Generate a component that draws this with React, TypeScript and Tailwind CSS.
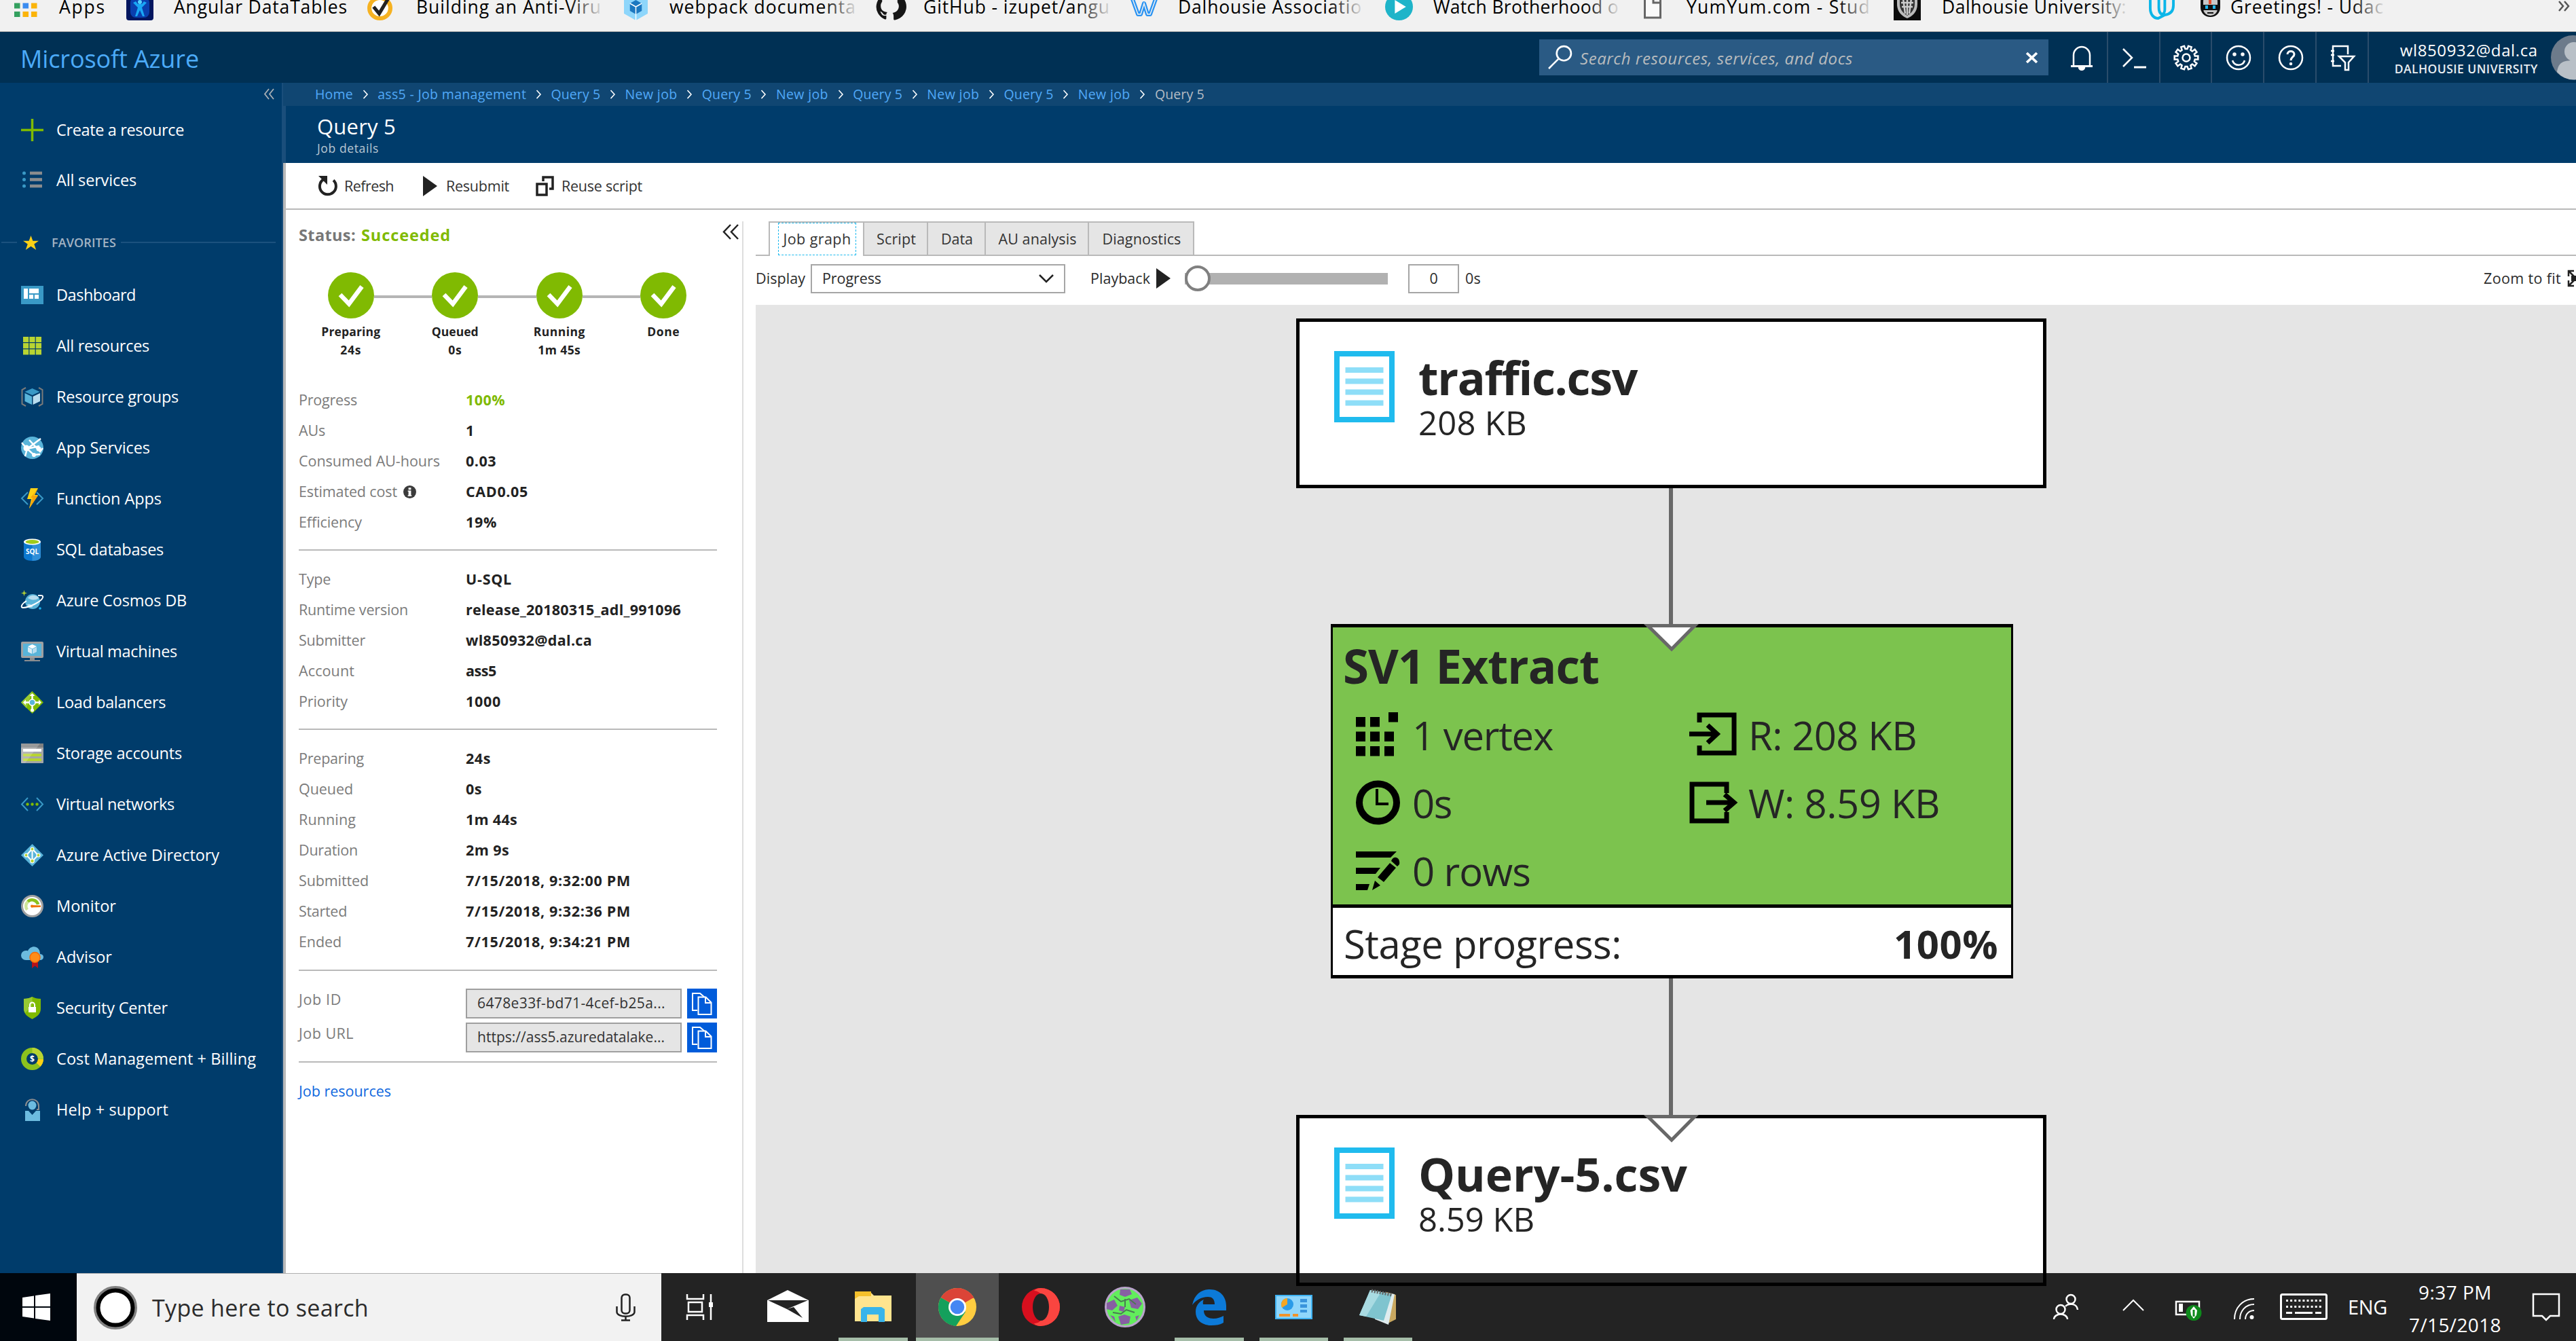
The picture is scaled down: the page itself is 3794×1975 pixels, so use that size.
import React, { useLayoutEffect, useRef, useState } from "react";

/* Text run whose tracking is computed so that it fills a given advance width. */
function T({ w, c = "", children }: { w: number; c?: string; children: string }) {
  const ref = useRef<HTMLSpanElement>(null);
  const [ls, setLs] = useState(0);
  useLayoutEffect(() => {
    if (!ref.current) return;
    const natural = ref.current.getBoundingClientRect().width - ls * children.length;
    setLs((w - natural) / children.length);
  }, [w, children]);
  return (
    <span ref={ref} className={"inline-block shrink-0 whitespace-pre " + c} style={{ letterSpacing: ls + "px" }}>
      {children}
    </span>
  );
}

type IconProps = { children: React.ReactNode; c?: string; vb?: string };
const Svg = ({ children, c = "w-[33px] h-[33px]", vb = "0 0 33 33" }: IconProps) => (
  <svg viewBox={vb} className={"block shrink-0 overflow-visible " + c} fill="none" preserveAspectRatio="none">
    {children}
  </svg>
);

/* ---------- bookmarks ---------- */
const fade = "bg-linear-to-r from-transparent to-[#f1f1f1]";

function Bookmark({ lead, icon, iw, gap, w, text, faded = true }: { lead: number; icon: React.ReactNode; iw: number; gap: number; w: number; text: string; faded?: boolean }) {
  return (
    <div className="flex h-[32px] shrink-0 items-start" style={{ marginLeft: lead }}>
      <div className="shrink-0" style={{ width: iw }}>{icon}</div>
      <div className="relative -mt-[10px] shrink-0" style={{ marginLeft: gap }}>
        <T w={w} c="text-[26.5px] leading-[40px] text-black">{text}</T>
        {faded && <div className={"absolute top-0 -right-1 h-full w-[52px] " + fade} />}
      </div>
    </div>
  );
}

const bmSize = "w-full h-[40px] -mt-[10px]";

function Bookmarks() {
  return (
    <div className="flex h-[47px] shrink-0 overflow-hidden border-b border-[#aaaaaa] bg-[#f1f1f1]">
      <Bookmark lead={21} iw={34} gap={32} w={69} text="Apps" faded={false} icon={
        <Svg c="w-full h-[34px] -mt-[9px]" vb="0 0 34 34">
          {[["#e8453c", "#e8453c", "#e8453c"], ["#34a05f", "#3b8cf0", "#fbb40a"], ["#34a05f", "#fbb40a", "#fbb40a"]].map((r, y) =>
            r.map((f, x) => <rect key={x + "" + y} x={x * 12.5} y={y * 12.5 + 1} width="8.5" height="8" fill={f} />))}
        </Svg>} />
      <Bookmark lead={30} iw={40} gap={30} w={256} text="Angular DataTables" faded={false} icon={
        <Svg c={bmSize} vb="0 0 40 40">
          <rect width="40" height="40" rx="4" fill="#03165f" />
          <rect x="6" y="6" width="28" height="30" rx="8" fill="#0a3fae" />
          <path d="M10 14l7 7-4 13h3l4-9 4 9h3l-4-13 7-7-4-2-3 4h-6l-3-4z" fill="#19a7f5" />
          <circle cx="20" cy="13" r="3" fill="#54d2ff" />
        </Svg>} />
      <Bookmark lead={29} iw={37} gap={35} w={273} text="Building an Anti-Viru" icon={
        <Svg c={bmSize} vb="0 0 36 40">
          <circle cx="18" cy="22" r="15" fill="#fff" stroke="#f6b221" strokeWidth="6" />
          <path d="M9 20l8 10L31 6" stroke="#222" strokeWidth="5" />
        </Svg>} />
      <Bookmark lead={33} iw={35} gap={32} w={275} text="webpack documenta" icon={
        <Svg c={bmSize} vb="0 0 36 40">
          <path d="M18 0L36 10v20L18 40 0 30V10z" fill="#8ed6fb" />
          <path d="M18 10l9 5v11l-9 5-9-5V15z" fill="#1c78c0" />
          <path d="M18 40V31M18 20V31M18 20l9-5M18 20l-9-5" stroke="#fff" strokeWidth="1.5" />
        </Svg>} />
      <Bookmark lead={29} iw={41} gap={29} w={275} text="GitHub - izupet/angu" icon={
        <Svg c={bmSize} vb="0 0 40 40">
          <path d="M20 0a20 20 0 0 0-7 38.5c1.5.3 2-.6 2-1.5v-4c-6 1-7-3-7-3-1-2-2-3-2-3 3 0 4 3 5 4 1 1 3 1 4 .5 0-2 1-3 1.5-3.5-8-1-9.5-5-9.5-10 0-2 1-4 2-5.5V8c3 0 5 2 5 2h12s2-2 5-2v5.5c1 1.5 2 3.5 2 5.5 0 5-3 9-9 10 1 1 1.5 3 1.5 5v4c0 1 .5 1.5 2 1.5A20 20 0 0 0 20 0z" fill="#161616" />
          <path d="M12 12h16c3 4 2 12-8 12s-11-8-8-12z" fill="#f1f1f1" />
        </Svg>} />
      <Bookmark lead={30} iw={40} gap={30} w={271} text="Dalhousie Associatio" icon={
        <Svg c={bmSize} vb="0 0 40 40">
          <path d="M2 6l9 25h4l5-16 5 16h4l9-25" stroke="#2a93f2" strokeWidth="6" strokeLinejoin="round" />
          <path d="M2 6l9 25h4l5-16 5 16h4l9-25" stroke="#f1f1f1" strokeWidth="1.5" />
        </Svg>} />
      <Bookmark lead={34} iw={41} gap={30} w={273} text="Watch Brotherhood o" icon={
        <Svg c={bmSize} vb="0 0 40 40"><circle cx="20" cy="20" r="20" fill="#1eb4c9" /><path d="M14 10l16 10-16 10z" fill="#fff" /></Svg>} />
      <Bookmark lead={37} iw={26} gap={37} w={271} text="YumYum.com - Stud" icon={
        <Svg c="w-full h-[38px] -mt-[10px]" vb="0 0 26 38"><path d="M1.5 1h14l9 9v26h-23zM14 2v12h10" stroke="#666" strokeWidth="3" fill="#fafafa" /></Svg>} />
      <Bookmark lead={34} iw={40} gap={31} w={272} text="Dalhousie University:" icon={
        <Svg c={bmSize} vb="0 0 40 40">
          <rect width="40" height="40" fill="#0c0c0c" />
          <path d="M5 0h30v16c0 12-8 18-15 21C13 34 5 28 5 16z" fill="#bbb" />
          <path d="M9 4h22v12c0 9-6 14-11 17C15 30 9 25 9 16z" fill="#333" />
          <path d="M14 8l3 22M20 6v26M26 8l-3 22M11 14h18M12 20h16" stroke="#ccc" strokeWidth="2.5" />
        </Svg>} />
      <Svg c="ml-[32px] w-[39px] h-[40px] -mt-[10px]" vb="0 0 40 40"><path d="M3 2v20c0 9 5 15 12 15l10-5c-6 0-9-4-9-11V0M25 0v24c0 4-2 7-5 7M38 0v18c0 9-6 13-13 14" stroke="#0cb6e8" strokeWidth="4" /></Svg>
      <Bookmark lead={37} iw={31} gap={14} w={226} text="Greetings! - Udac" icon={
        <Svg c="w-full h-[38px] -mt-[12px]" vb="0 0 31 38">
          <rect x="1" y="0" width="29" height="37" rx="14" fill="#111" />
          <rect x="5" y="4" width="21" height="31" rx="10" fill="#c8c8c8" />
          <rect x="13" y="6" width="4" height="12" fill="#e84c2a" />
          <rect x="4" y="19" width="23" height="8" fill="#111" /><rect x="8" y="20" width="4" height="5" fill="#1fb8f0" /><rect x="19" y="20" width="4" height="5" fill="#1fb8f0" />
          <rect x="11" y="30" width="9" height="2" fill="#111" />
        </Svg>} />
      <Svg c="ml-auto mr-[10px] mt-[2px] h-[14px] w-[16px]" vb="0 0 16 14"><path d="M1 0l6 7-6 7M9 0l6 7-6 7" stroke="#555" strokeWidth="2.5" /></Svg>
    </div>
  );
}

/* ---------- portal header ---------- */
const gear = Array.from({ length: 10 }, (_, i) => {
  const p = (r: number, a: number) => `${19 + r * Math.cos(a)},${19 + r * Math.sin(a)}`;
  const a = (i * Math.PI) / 5;
  return [p(13, a - 0.2), p(17.5, a - 0.14), p(17.5, a + 0.14), p(13, a + 0.2)].join(" ");
}).join(" ");

const headerIcons = [
  <><path d="M7 31V15a12 12 0 0 1 24 0v16" /><path d="M3 31.5h32" strokeWidth="3" /><path d="M15 33c0 5 8 5 8 0" fill="#fff" /></>,
  <><path d="M3 6l13 13L3 32" /><path d="M19 33h18" strokeWidth="3" /></>,
  <><polygon points={gear} /><circle cx="19" cy="19" r="5.5" /></>,
  <><circle cx="19" cy="19" r="17" /><path d="M10 23c3 9 15 9 18 0" /><circle cx="13" cy="14" r="1.5" fill="#fff" /><circle cx="25" cy="14" r="1.5" fill="#fff" /></>,
  <><circle cx="19" cy="19" r="17" /><path d="M14 14c0-6 10-6 10 0 0 4-5 4-5 9" strokeWidth="3" /><circle cx="19" cy="28" r="1" fill="#fff" /></>,
  <><path d="M17 31H5V2h22v12M2 9h5M2 15h5M2 24h5" /><path d="M14 17h22l-8 9v11h-5V26z" /></>,
];

function Header() {
  return (
    <div className="flex h-[75px] shrink-0 items-center overflow-hidden bg-[#003054]">
      <T w={263} c="ml-[30px] pt-[4px] text-[36px] leading-[50px] text-[#4cabf8]">Microsoft Azure</T>
      <div className="ml-[1974px] flex h-[53px] w-[750px] shrink-0 items-center bg-[#2a5a84] pl-[13px]">
        <Svg c="w-[35px] h-[35px]"><circle cx="22" cy="11" r="10" stroke="#fff" strokeWidth="2.5" /><path d="M15 18L1 32" stroke="#fff" strokeWidth="2.5" /></Svg>
        <T w={402} c="ml-[12px] pt-[2px] text-[24px] leading-[34px] text-[#b9bcbe] italic">Search resources, services, and docs</T>
        <Svg c="mr-[16px] ml-auto w-[17px] h-[16px]" vb="0 0 16 16"><path d="M1 1l14 14M15 1L1 15" stroke="#fff" strokeWidth="3.5" /></Svg>
      </div>
      <div className="ml-[11px] flex h-full shrink-0">
        {headerIcons.map((ic, i) => (
          <div key={i} className="flex h-full w-[76.8px] items-center justify-center border-r-2 border-[#2a4c6b]">
            <Svg c="ml-[2px] w-[38px] h-[38px]" vb="0 0 38 38"><g stroke="#fff" strokeWidth="2.5">{ic}</g></Svg>
          </div>
        ))}
      </div>
      <div className="flex w-[249px] shrink-0 flex-col items-end pt-[2px]">
        <T w={203} c="text-[24px] leading-[32px] text-white">wl850932@dal.ca</T>
        <T w={211} c="-mt-[2px] text-[17.5px] leading-[26px] font-semibold text-[#e8edf1]">DALHOUSIE UNIVERSITY</T>
      </div>
      <Svg c="ml-[19px] w-[65px] h-[65px]" vb="0 0 65 65">
        <circle cx="32.5" cy="32.5" r="32.5" fill="#6d7b8b" />
        <circle cx="34" cy="24" r="14" fill="#b9c0c7" /><path d="M9 54c2-16 12-17 25-17s22 3 24 17a32 32 0 0 1-49 0z" fill="#b9c0c7" />
      </Svg>
    </div>
  );
}

/* ---------- sidebar ---------- */
const cube = (
  <><path d="M16.5 4l11 5-11 5-11-5z" fill="#3999c6" /><path d="M5.5 11L16 16v12L5.5 23z" fill="#59b4d9" /><path d="M28 11l-10.500 5v12L28 23z" fill="#b8dcee" /></>
);

const nav: [string, number, React.ReactNode][] = [
  ["Dashboard", 117, <><rect y="3" width="33" height="27" fill="#3999c6" /><path d="M4 7h6v15H4zM12 7h14v7H12zM12 16h6v6h-6zM20 16h6v6h-6z" fill="#fff" /></>],
  ["All resources", 137, <>{[0, 1, 2].map(y => [0, 1, 2].map(x => <rect key={x + "" + y} x={3 + x * 9.4} y={3 + y * 9.2} width="8.2" height="8" fill="#b8d432" />))}</>],
  ["Resource groups", 180, <>{cube}<path d="M7 3L1.5 6v21L7 30M26 3l5.5 3v21L26 30" stroke="#7a7a7a" strokeWidth="2" /></>],
  ["App Services", 138, <><circle cx="16.5" cy="16.5" r="16.5" fill="#59b4d9" /><path d="M1 9l8 9 20-15M9 18L6 29M9 18l18-4M12 5l16 17 4-5M9 18l10 9 9-1" stroke="#fff" strokeWidth="2.5" /><circle cx="8" cy="17" r="4.5" fill="#fff" /><circle cx="26" cy="18" r="3.5" fill="#fff" /><circle cx="19" cy="27" r="3" fill="#fff" /></>],
  ["Function Apps", 155, <><path d="M10 7L1 16l9 9M23 7l9 9-9 9" stroke="#3999c6" strokeWidth="2" /><path d="M14 1h11l-5 10h5L12 31l3-14H9z" fill="#fcd116" /><path d="M25 1l-7 11h7L12 31l5-16h-3z" fill="#f5a60c" /></>],
  ["SQL databases", 158, <><path d="M4 5v22c0 3 5 6 12.5 6S29 30 29 27V5z" fill="#0c78cf" /><path d="M16.5 5H29v22c0 3-5 6-12.500 6z" fill="#2f8fd8" /><ellipse cx="16.5" cy="5" rx="12.5" ry="4.5" fill="#fff" /><ellipse cx="16.5" cy="5" rx="10" ry="3" fill="#9fca1c" /><text x="16.5" y="23" textAnchor="middle" fontSize="10" fontWeight="700" fill="#fff" fontFamily="Open Sans">SQL</text></>],
  ["Azure Cosmos DB", 192, <><circle cx="17" cy="18" r="11" fill="#59b4d9" /><path d="M10 13c4-6 12-5 16-1 0 3-8 4-11 3zM9 22c4-1 8 1 8 4-3 2-7 0-8-4z" fill="#b8dcee" /><path d="M8 17C0 22-1 27 3 27c9 0 27-9 29-15 1-4-4-3-7-3" stroke="#fff" strokeWidth="2" /><path d="M4.5 1l1 3.5 3.5 1-3.5 1-1 3.5-1-3.5-3.500-1 3.5-1z" fill="#b8d432" /><circle cx="28" cy="28" r="1.8" fill="#1eb4ee" /></>],
  ["Virtual machines", 178, <><rect y="2" width="33" height="24" rx="2" fill="#a0a1a2" /><rect x="3" y="5" width="27" height="18" fill="#59b4d9" /><path d="M16.5 6l6.5 3-6.500 3.5L10 9z" fill="#fff" /><path d="M10 10l6 3v7l-6-3z" fill="#dcedf6" /><path d="M23 10l-6 3v7l6-3z" fill="#b8dcee" /><path d="M13 26h7v3h8v2H5v-2h8z" fill="#8b8d8f" /></>],
  ["Load balancers", 161, <><path d="M16.5 0L33 16.5 16.5 33 0 16.5z" fill="#7fba00" /><path d="M16.5 0L8 25 0 16.5z" fill="#9acb33" /><path d="M16.5 5v22M6 16.5h21" stroke="#fff" strokeWidth="2.5" /><path d="M12.5 7l4-4 4 4zM7 12.5l-4 4 4 4zM26 12.5l4 4-4 4z" fill="#fff" /><circle cx="16.5" cy="28" r="2.5" fill="#fff" /><circle cx="16.5" cy="16.5" r="4.5" fill="#59b4d9" stroke="#fff" strokeWidth="1.5" /></>],
  ["Storage accounts", 185, <><rect y="2" width="33" height="29" rx="1" fill="#a5a6a7" /><rect y="2" width="33" height="6" fill="#7f8081" /><rect x="3" y="10" width="27" height="4" fill="#fff" /><rect x="3" y="17" width="27" height="4" fill="#b8d432" /><rect x="3" y="24" width="27" height="4" fill="#b8d432" /><path d="M0 2h28L6 31H0z" fill="#fff" fillOpacity=".2" /></>],
  ["Virtual networks", 174, <><path d="M10 7L1 16.5l9 9.5M23 7l9 9.5-9 9.5" stroke="#3999c6" strokeWidth="2" /><circle cx="9.5" cy="16.5" r="2.2" fill="#7fba00" /><circle cx="16.5" cy="16.5" r="2.2" fill="#7fba00" /><circle cx="23.5" cy="16.5" r="2.2" fill="#7fba00" /></>],
  ["Azure Active Directory", 240, <><path d="M16.5 0L33 16.5 16.5 33 0 16.5z" fill="#59b4d9" /><path d="M16.5 7L8 16.5l8.5 9 8.5-9zM16.5 7v18" stroke="#fff" strokeWidth="2" /><g fill="#b8d432" stroke="#fff" strokeWidth="1.2"><circle cx="16.5" cy="7.5" r="2.5" /><circle cx="7.5" cy="16.5" r="2.5" /><circle cx="25.5" cy="16.5" r="2.5" /><circle cx="16.5" cy="25" r="2.8" /></g></>],
  ["Monitor", 88, <><circle cx="16.5" cy="16.5" r="15" fill="#fff" stroke="#a0a1a2" strokeWidth="3" /><path d="M9 22a9 9 0 0 1 1-12" stroke="#cfe59a" strokeWidth="4.5" /><path d="M10 10a9 9 0 0 1 15 4" stroke="#8cc21e" strokeWidth="4.5" /><path d="M15 15l14 .5v2.5l-14 .5z" fill="#f0740d" /><circle cx="16" cy="16.5" r="2" fill="#f0740d" /></>],
  ["Advisor", 82, <><path d="M7 21a7 7 0 0 1 0-14c2 0 2 0 3 .5C14-2 28-1 28 12c7 0 6 9 1 9z" fill="#6cbbdf" /><path d="M16 22v11l4.5-3.5L25 33V22z" fill="#b5121b" /><circle cx="20.5" cy="17" r="7.5" fill="#ff8c1a" stroke="#ef6c0c" strokeWidth="1.5" /></>],
  ["Security Center", 164, <><path d="M4 3c5 0 9-1 12.5-3C20 2 24 3 29 3v15c0 8-7 12-12.500 15C11 30 4 26 4 18z" fill="#7fba00" /><path d="M4 3c5 0 9-1 12.5-3v13L6 24c-1-2-2-4-2-6z" fill="#97c933" /><rect x="11" y="15" width="11" height="8" fill="#fff" /><path d="M13 15v-3a3.5 3.5 0 0 1 7 0v3" stroke="#fff" strokeWidth="2" /></>],
  ["Cost Management + Billing", 294, <><circle cx="16.5" cy="16.5" r="12.5" stroke="#8cc21e" strokeWidth="8" /><path d="M16.5 4A12.5 12.5 0 0 1 29 16.5" stroke="#b8d432" strokeWidth="8" /><path d="M29 17a12.5 12.5 0 0 1-3.5 8" stroke="#fcd116" strokeWidth="8" /><text x="16.5" y="21" textAnchor="middle" fontSize="12" fontWeight="700" fill="#fff" fontFamily="Open Sans">$</text></>],
  ["Help + support", 165, <><path d="M7 11C7-2 26-2 26 11v5h-3" stroke="#8b8d8f" strokeWidth="2" /><ellipse cx="16.5" cy="10" rx="6" ry="6.5" fill="#6cbbdf" /><path d="M6 18h5l5.5 6 5.5-6h6v15H6z" fill="#6cbbdf" /></>],
];

const NavRow = ({ icon, w, label, h = "h-[75px]" }: { icon: React.ReactNode; w: number; label: string; h?: string }) => (
  <div className={"flex shrink-0 items-center pb-[1px] pl-[31px] " + h}>
    <Svg>{icon}</Svg>
    <T w={w} c="ml-[19px] text-[23.5px] leading-[32px] text-white">{label}</T>
  </div>
);

function Sidebar() {
  return (
    <div className="flex w-[415px] shrink-0 flex-col bg-[#003c6b]">
      <div className="flex h-[33px] shrink-0 items-center justify-end pr-[11px]">
        <Svg c="w-[15px] h-[15px]" vb="0 0 15 15"><path d="M7 0L1 7.5 7 15M14 0L8 7.5l6 7.5" stroke="#a9b0b6" strokeWidth="1.8" /></Svg>
      </div>
      <NavRow h="h-[73px]" w={188} label="Create a resource" icon={<path d="M16.5 0v33M0 16.5h33" stroke="#7fba00" strokeWidth="3.5" />} />
      <NavRow h="h-[74px]" w={118} label="All services" icon={<>{[7, 16.5, 26].map(y => <g key={y}><circle cx="4.5" cy={y} r="2.5" fill="#3999c6" /><rect x="13" y={y - 2.3} width="18" height="4.6" fill="#8a8c8e" /></g>)}</>} />
      <div className="flex h-[95px] shrink-0 items-center pt-[15px] pl-[2px]">
        <div className="h-[2px] w-[23px] bg-[#1b517e]" />
        <Svg c="ml-[9px] w-[23px] h-[21px]" vb="0 0 24 22"><path d="M12 0l3 8h9l-7 5 3 9-8-5.500L4 22l3-9-7-5h9z" fill="#fcd116" /></Svg>
        <T w={95} c="ml-[19px] text-[18px] leading-[26px] font-semibold text-[#a3b3c3]">FAVORITES</T>
        <div className="mr-[9px] ml-[7px] h-[2px] flex-1 bg-[#1b517e]" />
      </div>
      {nav.map(([label, w, icon]) => <NavRow key={label} label={label} w={w} icon={icon} />)}
    </div>
  );
}

/* ---------- blade header ---------- */
const crumbs: [string, number][] = [
  ["Home", 56], ["ass5 - Job management", 219], ["Query 5", 73], ["New job", 77], ["Query 5", 73], ["New job", 77],
  ["Query 5", 73], ["New job", 77], ["Query 5", 73], ["New job", 77], ["Query 5", 73],
];

function BladeHeader() {
  return (
    <>
      <div className="flex h-[34px] shrink-0 items-center bg-[#104672] pl-[47px]">
        {crumbs.map(([t, w], i) => (
          <React.Fragment key={i}>
            <T w={w} c={"text-[19.5px] leading-[30px] " + (i === crumbs.length - 1 ? "text-[#b4bcc4]" : "text-[#51a9f8]")}>{t}</T>
            {i < crumbs.length - 1 && <Svg c="mx-[14.6px] w-[7px] h-[12px]" vb="0 0 7 12"><path d="M.5 0L6 6 .5 12" stroke="#fff" strokeWidth="1.6" /></Svg>}
          </React.Fragment>
        ))}
      </div>
      <div className="flex h-[84px] shrink-0 flex-col items-start border-l-4 border-[#1a4e7b] bg-[#003c6b] pt-[9px] pl-[46px]">
        <T w={116} c="text-[31px] leading-[42px] text-white">Query 5</T>
        <T w={91} c="mt-[-2px] text-[17.5px] leading-[26px] text-[#b9c7d3]">Job details</T>
      </div>
    </>
  );
}

/* ---------- job summary ---------- */
const Row = ({ label, lw, value, vw, green, info }: { label: string; lw: number; value: string; vw: number; green?: boolean; info?: boolean }) => (
  <div className="flex h-[45px] shrink-0 items-center pb-[2px] text-[21.5px] leading-[30px]">
    <div className="flex w-[246px] items-center">
      <T w={lw} c="text-[#7b7b7b]">{label}</T>
      {info && (
        <Svg c="ml-[9px] mt-[2px] w-[19px] h-[19px]" vb="0 0 20 20"><circle cx="10" cy="10" r="10" fill="#3b3b3b" /><path d="M8 3.5h4v3H8zM7 8h5v7h1v1.5H7V15h1V9.5H7z" fill="#fff" /></Svg>
      )}
    </div>
    <T w={vw} c={"font-bold " + (green ? "text-[#80ba02]" : "text-[#222222]")}>{value}</T>
  </div>
);

const Rule = ({ c }: { c: string }) => <div className={"h-[2px] w-[616px] shrink-0 bg-[#b9b9b9] " + c} />;

const steps: [string, number, string, number][] = [["Preparing", 87, "24s", 31], ["Queued", 69, "0s", 20], ["Running", 76, "1m 45s", 63], ["Done", 48, "", 0]];

const CopyField = ({ label, lw, value, vw, mt }: { label: string; lw: number; value: string; vw: number; mt: string }) => (
  <div className={"flex h-[44px] shrink-0 " + mt}>
    <T w={lw} c="mt-[1px] text-[21.5px] leading-[30px] text-[#7b7b7b]">{label}</T>
    <div className="ml-auto flex h-[44px] w-[318px] items-center border-2 border-[#9f9f9f] bg-[#e5e5e5] pb-[3px] pl-[15px]">
      <T w={vw} c="text-[21px] leading-[30px] text-[#333333]">{value}</T>
    </div>
    <div className="mr-[37px] ml-[8px] flex h-[44px] w-[44px] items-center justify-center bg-[#015cda]">
      <Svg c="w-[30px] h-[33px]" vb="0 0 30 33">
        <path d="M8 26H1V1h11l7 6" stroke="#fff" strokeWidth="2" />
        <path d="M9.5 6.5h11l8 8V32h-19zM20 7v8h8" stroke="#fff" strokeWidth="2" fill="#015cda" />
      </Svg>
    </div>
  </div>
);

function Summary() {
  return (
    <div className="flex w-[672px] shrink-0 flex-col pl-[19px]">
      <div className="flex h-[73px] shrink-0 items-center">
        <T w={84} c="text-[23.5px] leading-[32px] font-bold text-[#777777]">Status:</T>
        <T w={132} c="ml-[8px] text-[23.5px] leading-[32px] font-bold text-[#80ba02]">Succeeded</T>
        <Svg c="mr-[5px] mb-[9px] ml-auto w-[24px] h-[23px]" vb="0 0 24 23"><path d="M12 1L2 11.5 12 22M23 1L13 11.5 23 22" stroke="#222" strokeWidth="2.5" /></Svg>
      </div>
      <div className="mt-[19px] grid h-[129px] w-[614px] shrink-0 grid-cols-4">
        {steps.map(([n, w, d, dw], i) => (
          <div key={n} className="flex flex-col items-center">
            <div className="mb-[6px] flex w-full items-center">
              <div className={"mt-[3px] h-[4px] flex-1 " + (i ? "bg-[#b5b5b5]" : "bg-transparent")} />
              <Svg c="w-[68px] h-[68px]" vb="0 0 68 68"><circle cx="34" cy="34" r="34" fill="#80ba02" /><path d="M18 33l13 13.5L50 21" stroke="#fff" strokeWidth="6.5" /></Svg>
              <div className={"mt-[3px] h-[4px] flex-1 " + (i < 3 ? "bg-[#b5b5b5]" : "bg-transparent")} />
            </div>
            <T w={w} c="text-[17.5px] leading-[27px] font-bold text-[#222222]">{n}</T>
            {d && <T w={dw} c="text-[17.5px] leading-[27px] font-bold text-[#222222]">{d}</T>}
          </div>
        ))}
      </div>
      <div className="h-[37px] shrink-0" />
      <Row label="Progress" lw={86} value="100%" vw={58} green />
      <Row label="AUs" lw={39} value="1" vw={12} />
      <Row label="Consumed AU-hours" lw={208} value="0.03" vw={45} />
      <Row label="Estimated cost" lw={145} value="CAD0.05" vw={92} info />
      <Row label="Efficiency" lw={93} value="19%" vw={46} />
      <Rule c="mt-[17px] mb-[20px]" />
      <Row label="Type" lw={47} value="U-SQL" vw={68} />
      <Row label="Runtime version" lw={161} value="release_20180315_adl_991096" vw={317} />
      <Row label="Submitter" lw={98} value="wl850932@dal.ca" vw={186} />
      <Row label="Account" lw={82} value="ass5" vw={45} />
      <Row label="Priority" lw={72} value="1000" vw={52} />
      <Rule c="mt-[17px] mb-[20px]" />
      <Row label="Preparing" lw={96} value="24s" vw={37} />
      <Row label="Queued" lw={80} value="0s" vw={24} />
      <Row label="Running" lw={84} value="1m 44s" vw={76} />
      <Row label="Duration" lw={87} value="2m 9s" vw={64} />
      <Row label="Submitted" lw={103} value="7/15/2018, 9:32:00 PM" vw={243} />
      <Row label="Started" lw={71} value="7/15/2018, 9:32:36 PM" vw={243} />
      <Row label="Ended" lw={63} value="7/15/2018, 9:34:21 PM" vw={243} />
      <Rule c="mt-[18px]" />
      <CopyField label="Job ID" lw={63} value="6478e33f-bd71-4cef-b25a..." vw={277} mt="mt-[26px]" />
      <CopyField label="Job URL" lw={81} value="https://ass5.azuredatalake..." vw={276} mt="mt-[6px]" />
      <Rule c="mt-[13px]" />
      <T w={136} c="mt-[27px] self-start text-[21.5px] leading-[30px] text-[#0f68de]">Job resources</T>
    </div>
  );
}

/* ---------- job graph ---------- */
function FileNode({ c, name, nw, size, sw }: { c: string; name: string; nw: number; size: string; sw: number }) {
  return (
    <div className={"absolute flex h-[250px] w-[1105px] border-5 border-black bg-white pt-[43px] pl-[51px] " + c}>
      <Svg c="w-[89px] h-[105px]" vb="0 0 89 105">
        <rect x="4" y="4" width="81" height="97" stroke="#20bbee" strokeWidth="8" fill="#fff" />
        {[24, 40.5, 56.5, 72.5].map(y => <rect key={y} x="16.5" y={y} width="56" height="8" fill="#8edef8" />)}
      </Svg>
      <div className="mt-[2px] ml-[35px] flex flex-col items-start text-[#252525]">
        <T w={nw} c="text-[68px] leading-[74px] font-bold">{name}</T>
        <T w={sw} c="text-[49px] leading-[59px]">{size}</T>
      </div>
    </div>
  );
}

const Arrow = ({ c }: { c: string }) => (
  <Svg c={"absolute w-[77px] h-[41px] " + c} vb="0 0 77 41"><path d="M4 2.5h69L39 37z" fill="#fff" stroke="#686868" strokeWidth="5" /></Svg>
);

function Metric({ icon, w, text, ml = "ml-[13px]" }: { icon: React.ReactNode; w: number; text: string; ml?: string }) {
  return (
    <div className="flex items-center">
      <Svg c="w-[70px] h-[66px]" vb="0 0 70 66">{icon}</Svg>
      <T w={w} c={"mt-[3px] text-[58px] leading-[80px] text-[#252525] " + ml}>{text}</T>
    </div>
  );
}

function Graph() {
  return (
    <div className="relative flex-1 overflow-hidden bg-[#e5e5e5]">
      <div className="absolute top-[269px] left-[1345px] h-[205px] w-[6px] bg-[#686868]" />
      <div className="absolute top-[990px] left-[1345px] h-[205px] w-[6px] bg-[#686868]" />
      <FileNode c="top-[20px] left-[796px]" name="traffic.csv" nw={322} size="208 KB" sw={160} />
      <div className="absolute top-[470px] left-[847px] flex h-[522px] w-[1005px] flex-col border-x-3 border-y-5 border-black bg-[#7cc34e]">
        <div className="flex h-[107px] shrink-0 items-center pl-[15px]">
          <T w={377} c="mt-[5px] text-[69px] leading-[80px] font-bold text-[#252525]">SV1 Extract</T>
        </div>
        <div className="grid h-[301px] shrink-0 grid-cols-[491px_1fr] grid-rows-3 pl-[34px]">
          <Metric w={207} text="1 vertex" icon={<g fill="#000">{[0, 1, 2].map(y => [0, 1, 2].map(x => (
            <rect key={x + "" + y} x={x * 21 + (y === 0 && x === 2 ? 6 : 0)} y={8 + y * 21.5 - (y === 0 && x === 2 ? 7 : 0)} width="14" height="14.5" />)))}</g>} />
          <Metric w={248} ml="ml-[17px]" text="R: 208 KB" icon={<path d="M15 16V5h51v56H15V50M0 33h42M27 20l14 13-14 13" stroke="#000" strokeWidth="7" />} />
          <Metric w={58} text="0s" icon={<><circle cx="32.5" cy="34" r="27.5" stroke="#000" strokeWidth="10" /><path d="M31 14v22h17" stroke="#000" strokeWidth="4" /></>} />
          <Metric w={282} ml="ml-[17px]" text="W: 8.59 KB" icon={<path d="M55 20V7H4v54h51V48M25 34h42M52 22l14 12-14 12" stroke="#000" strokeWidth="7" />} />
          <Metric w={174} text="0 rows" icon={<>
            <path d="M0 5h60l-9 9H0zM0 29h36l-7 9H0zM0 53h20l-3 9H0z" fill="#000" />
            <path d="M32 43l18-21 9 7-18 21zM28 48l8 7-12 7zM52 19c3-9 14-6 12 5l-3 3z" fill="#000" />
          </>} />
        </div>
        <div className="flex flex-1 items-center justify-between border-t-5 border-black bg-white pt-[7px] pr-[19px] pl-[16px] text-[58px] leading-[80px] text-[#252525]">
          <T w={409}>Stage progress:</T>
          <T w={154} c="font-bold">100%</T>
        </div>
      </div>
      <FileNode c="top-[1193px] left-[796px]" name="Query-5.csv" nw={396} size="8.59 KB" sw={171} />
      <Arrow c="top-[470px] left-[1310px]" />
      <Arrow c="top-[1193px] left-[1310px]" />
    </div>
  );
}

const tabs: [string, number, string][] = [
  ["Script", 58, "w-[96px]"], ["Data", 47, "w-[85px]"], ["AU analysis", 115, "w-[152px]"], ["Diagnostics", 116, "w-[155px]"],
];

function JobView() {
  return (
    <div className="flex min-w-0 flex-1 flex-col pl-[18px]">
      <div className="flex h-[68px] shrink-0 items-end pt-[17px]">
        <div className="h-[2px] w-[19px] bg-[#b9b9b9]" />
        <div className="flex h-[51px] w-[139px] border-t-2 border-l-2 border-[#b9b9b9] pl-[12px]">
          <div className="flex h-[48px] w-[115px] items-center justify-center border border-dashed border-[#1cb9ee]">
            <T w={100} c="text-[21.5px] leading-[30px] text-[#333333]">Job graph</T>
          </div>
        </div>
        {tabs.map(([t, w, cw], i) => (
          <div key={t} className={"flex h-[51px] items-center justify-center border-y-2 border-r-2 border-[#b9b9b9] bg-[#e5e5e5] pl-[2px] " + cw + (i === 0 ? " border-l-2" : "")}>
            <T w={w} c="text-[21.5px] leading-[30px] text-[#333333]">{t}</T>
          </div>
        ))}
        <div className="h-[2px] flex-1 bg-[#b9b9b9]" />
      </div>
      <div className="flex h-[72px] shrink-0 items-center overflow-hidden pb-[6px] text-[21.5px] leading-[30px] text-[#2b2b2b]">
        <T w={73}>Display</T>
        <div className="ml-[8px] flex h-[43px] w-[375px] items-center justify-between border-2 border-[#a6a6a6] pr-[15px] pl-[15px]">
          <T w={87}>Progress</T>
          <Svg c="w-[22px] h-[12px]" vb="0 0 22 12"><path d="M1 1l10 10L21 1" stroke="#222" strokeWidth="2.5" /></Svg>
        </div>
        <T w={88} c="ml-[37px]">Playback</T>
        <Svg c="ml-[9px] w-[21px] h-[30px]" vb="0 0 21 30"><path d="M0 0l21 15L0 30z" fill="#222" /></Svg>
        <div className="relative ml-[21px] flex h-[38px] w-[299px] items-center">
          <div className="h-[17px] w-full bg-[#b1b1b1]" />
          <div className="absolute left-0 h-[38px] w-[38px] rounded-full border-4 border-[#808080] bg-white" />
        </div>
        <div className="ml-[30px] flex h-[43px] w-[75px] items-center justify-center border-2 border-[#a6a6a6]"><T w={12}>0</T></div>
        <T w={23} c="ml-[9px]">0s</T>
        <T w={114} c="ml-auto">Zoom to fit</T>
        <Svg c="ml-[10px] w-[12px] h-[24px]" vb="0 0 12 24"><path d="M1 9V1h8M1 1l9 9M1 15v8h8M1 23l9-9" stroke="#222" strokeWidth="2.5" /><rect x="5" y="8" width="7" height="8" fill="#222" /></Svg>
      </div>
      <Graph />
    </div>
  );
}

/* ---------- Windows taskbar ---------- */
const TaskBtn = ({ c, open, active, children }: { c: string; open?: boolean; active?: boolean; children: React.ReactNode }) => (
  <div className={"relative flex h-full shrink-0 items-center justify-center " + c + (active ? " bg-[#4f4f4f]" : "") + (open ? " border-b-5 border-[#a5bda8] pt-[5px]" : "")}>{children}</div>
);

function Taskbar() {
  return (
    <div className="relative flex h-[100px] shrink-0 items-stretch overflow-hidden bg-[#232323]">
      <div className="absolute top-0 left-[1909px] h-[19px] w-[1105px] border-x-5 border-b-5 border-black bg-[#272727]" />
      <div className="flex w-[113px] shrink-0 items-center justify-center bg-[#00060d] pr-[6px] pb-[1px]">
        <Svg c="w-[41px] h-[40px]" vb="0 0 41 40"><path d="M0 6l17-2.500V19H0zM19 3l22-3v19H19zM0 21h17v15.500L0 34zM19 21h22v19l-22-3z" fill="#fff" /></Svg>
      </div>
      <div className="flex w-[861px] shrink-0 items-center border-t border-[#b0b0b0] bg-[#f2f2f2] pl-[25px]">
        <Svg c="w-[64px] h-[64px]" vb="0 0 64 64"><circle cx="32" cy="32" r="30" stroke="#808080" strokeWidth="4" /><circle cx="32" cy="32" r="25.5" stroke="#000" strokeWidth="6" fill="#fff" /></Svg>
        <T w={319} c="mt-[1px] ml-[22px] text-[34px] leading-[48px] text-[#2b2b2b]">Type here to search</T>
        <Svg c="mr-[38px] ml-auto w-[29px] h-[41px]" vb="0 0 29 41"><rect x="8.5" y="1.5" width="12" height="28" rx="5" stroke="#222" strokeWidth="2.5" /><path d="M1.5 19v8c0 9 26 9 26 0v-8M14.5 34v6M8 39.5h13" stroke="#222" strokeWidth="2.5" /></Svg>
      </div>
      <TaskBtn c="ml-[37px] w-[42px]">
        <Svg c="w-[42px] h-[38px]" vb="0 0 42 38"><path d="M1 0v7h24V0M1 38v-7h24v7M3 12h20v14H3zM36 0v38" stroke="#fff" strokeWidth="2.5" /><rect x="33" y="12" width="6" height="7" fill="#fff" /></Svg>
      </TaskBtn>
      <TaskBtn c="ml-[77px] w-[61px]">
        <Svg c="mb-[4px] w-[61px] h-[47px]" vb="0 0 61 47"><path d="M0 15L30 0l31 15v32H0z" fill="#fff" /><path d="M1 15h59L29 28zM29 28l10-3 13 16z" fill="#232323" /></Svg>
      </TaskBtn>
      <TaskBtn c="ml-[44px] w-[102px]" open>
        <Svg c="w-[54px] h-[46px]" vb="0 0 54 46"><path d="M0 2h24l4 4h26v38H0z" fill="#ffe48f" /><path d="M0 0h24v7H6l-6 4z" fill="#f5c02b" /><path d="M9 45V26l4-3h26l5 3v19h-9V34H18v11z" fill="#39b4ea" /></Svg>
      </TaskBtn>
      <TaskBtn c="ml-[12px] w-[122px]" open active>
        <Svg c="w-[56px] h-[56px]" vb="0 0 56 56">
          <circle cx="28" cy="28" r="28" fill="#ffcd40" />
          <path d="M28 28L3.8 14A28 28 0 0 1 52.2 14z" fill="#db4437" />
          <path d="M28 0A28 28 0 0 1 52.2 15H28z" fill="#db4437" />
          <path d="M3.8 14A28 28 0 0 0 26 56l14-21-12-7z" fill="#14a05c" />
          <circle cx="28" cy="28" r="13" fill="#fff" /><circle cx="28" cy="28" r="10.3" fill="#4587f3" />
        </Svg>
      </TaskBtn>
      <TaskBtn c="ml-[34px] w-[56px]">
        <Svg c="w-[56px] h-[56px]" vb="0 0 56 56"><circle cx="28" cy="28" r="28" fill="#d80f1e" /><path d="M28 0a28 28 0 0 1 0 56c-8 0-10-4-10-4 22 0 22-47 0-48 0 0 3-4 10-4z" fill="#fa4540" /><ellipse cx="28" cy="28" rx="12" ry="20" fill="#232323" /></Svg>
      </TaskBtn>
      <TaskBtn c="ml-[66px] w-[60px]">
        <Svg c="w-[60px] h-[60px]" vb="0 0 60 60">
          <circle cx="30" cy="30" r="28.5" fill="#62ed5c" stroke="#b9a3cb" strokeWidth="3" />
          <path d="M23 4h14l3 7-10 4-8-3zM3 24l11-5 5 9-8 7-8-2zM36 20l12-4 7 9-6 8-10-2zM20 44l9-3 9 3-2 10-12 2zM8 42l6 2 2 8M45 44l6-2-4 8zM22 28l8 2-2 7-7-2z" fill="#875fa3" />
          <path d="M14 14l10 8 12-4 10 8M12 38l12 2 8-6 12 4M30 18v12" stroke="#4a7a52" strokeWidth="2" />
        </Svg>
      </TaskBtn>
      <TaskBtn c="ml-[43px] w-[102px]" open>
        <Svg c="w-[50px] h-[53px]" vb="0 0 50 53"><path d="M0 23C3 7 14 0 26 0c15 0 24 11 24 24v7H17c0 9 7 12 14 12 6 0 11-2 15-4v10c-5 3-11 4-18 4C14 53 5 45 5 33c0-9 5-15 12-18-2 3-1 6-1 7h17c0-8-4-11-10-11C13 11 5 16 0 23z" fill="#0c7ad8" /></Svg>
      </TaskBtn>
      <TaskBtn c="ml-[23px] w-[101px]" open>
        <Svg c="w-[55px] h-[36px]" vb="0 0 55 36"><rect width="55" height="36" fill="#3fb2f2" /><rect x="2" y="2" width="51" height="32" fill="#8fd6fb" /><circle cx="18" cy="14" r="9" fill="#2a9be8" /><path d="M18 5v9l-8 5C7 12 11 5 18 5z" fill="#f5a623" /><path d="M6 28h16v4H6zM26 28h8v4h-8z" fill="#f0932a" /><path d="M37 6h10v5H37zM37 14h10v5H37zM37 22h10v4H37z" fill="#3a94dc" /></Svg>
      </TaskBtn>
      <TaskBtn c="ml-[23px] w-[101px]" open>
        <Svg c="w-[55px] h-[52px]" vb="0 0 55 52"><path d="M40 4l14 4v36L42 50z" fill="#c9a860" /><path d="M19 2l33 5-9 45-20-8z" fill="#dfecee" /><path d="M16 1l32 6L36 46 0 38z" fill="#7fc4cf" /><path d="M16 1l16 3L10 40l-10-2z" fill="#a9dbe2" /><path d="M18 2l30 6" stroke="#666" strokeWidth="5" strokeDasharray="2 2" /></Svg>
      </TaskBtn>
      <div className="relative mt-[31px] ml-auto flex h-[40px] items-start pr-[24px]">
        <Svg c="w-[37px] h-[38px]" vb="0 0 37 38"><g stroke="#fff" strokeWidth="2.5"><circle cx="26" cy="7.5" r="6.5" /><path d="M18 18c4-5 17-5 18 5" /><circle cx="11" cy="22.5" r="6.5" /><path d="M1 37c1-10 19-10 20 0" /></g></Svg>
        <Svg c="mt-[8px] ml-[65px] w-[32px] h-[17px]" vb="0 0 32 17"><path d="M1 16L16 1l15 15" stroke="#fff" strokeWidth="2" /></Svg>
        <Svg c="mt-[9px] ml-[46px] w-[39px] h-[30px]" vb="0 0 39 30"><rect x="1" y="2" width="34" height="19" stroke="#fff" strokeWidth="2.5" /><rect x="5" y="5" width="6" height="12" fill="#fff" /><circle cx="27" cy="18.5" r="11.5" fill="#0e8a1c" /><path d="M27 9l5 6-1 7-4 5-4-5-1-7z" fill="#fff" /><path d="M27 14v10" stroke="#0e8a1c" strokeWidth="3" /></Svg>
        <Svg c="mt-[6px] ml-[47px] w-[31px] h-[31px]" vb="0 0 31 31"><path d="M1 31C1 14 13 1 30 1M9 31C9 18 18 9 30 9M17 31c0-8 6-13 13-13" stroke="#fff" strokeWidth="2" /><circle cx="26.5" cy="28" r="3" fill="#fff" /></Svg>
        <Svg c="ml-[37px] mt-[-1px] w-[70px] h-[39px]" vb="0 0 70 39"><rect x="1.5" y="1.5" width="67" height="36" rx="2" stroke="#fff" strokeWidth="3" /><path d="M9 10.5h52M9 19.5h52" stroke="#fff" strokeWidth="3" strokeDasharray="3 3.1" /><path d="M9 28.5h9M22 28.5h26M52 28.5h9" stroke="#fff" strokeWidth="3" /></Svg>
        <T w={58} c="-mt-[1px] ml-[30px] text-[29px] leading-[40px] text-white">ENG</T>
        <div className="-mt-[27px] ml-[32px] flex w-[136px] flex-col items-center text-[28px] leading-[48px] text-white">
          <T w={108}>9:37 PM</T>
          <T w={136}>7/15/2018</T>
        </div>
        <Svg c="mt-[-1px] ml-[46px] w-[40px] h-[40px]" vb="0 0 40 40"><path d="M1 1h38v32H26l-6 6-6-6H1z" stroke="#fff" strokeWidth="2.5" /></Svg>
      </div>
    </div>
  );
}

export default function App() {
  return (
    <div className="flex h-[1975px] w-[3794px] flex-col overflow-hidden bg-white font-['Open_Sans',sans-serif]">
      <Bookmarks />
      <Header />
      <div className="flex h-[1753px] shrink-0">
        <Sidebar />
        <div className="flex min-w-0 flex-1 flex-col border-l-2 border-[#1a4e7b]">
          <BladeHeader />
          <div className="flex min-h-0 flex-1 flex-col border-l-4 border-[#b9b9b9]">
            <div className="flex h-[69px] shrink-0 items-center border-b-2 border-[#b9b9b9] pl-[47px] text-[21.5px] leading-[30px] text-[#333333]">
              <Svg c="w-[29px] h-[30px]" vb="0 0 29 30"><path d="M23 6.5A12 12 0 1 1 8 5.5" stroke="#222" strokeWidth="4" /><path d="M1 0h13v13z" fill="#222" /></Svg>
              <T w={73} c="ml-[10px]">Refresh</T>
              <Svg c="ml-[43px] w-[21px] h-[30px]" vb="0 0 21 30"><path d="M0 0l21 15L0 30z" fill="#222" /></Svg>
              <T w={93} c="ml-[13px]">Resubmit</T>
              <Svg c="ml-[39px] w-[27px] h-[30px]" vb="0 0 27 30"><path d="M2 12h14v16H2zM11 8V2h14v17h-5" stroke="#222" strokeWidth="3.5" /></Svg>
              <T w={119} c="ml-[11px]">Reuse script</T>
            </div>
            <div className="flex min-h-0 flex-1">
              <Summary />
              <div className="mt-[17px] w-[2px] shrink-0 bg-[#dedede]" />
              <JobView />
            </div>
          </div>
        </div>
      </div>
      <Taskbar />
    </div>
  );
}
